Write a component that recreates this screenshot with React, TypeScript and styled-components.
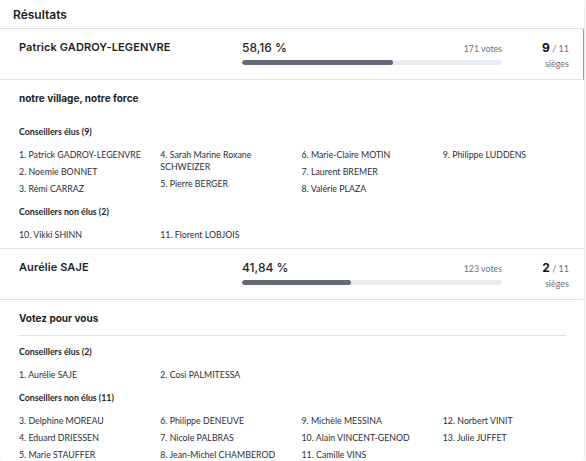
import { Fragment } from 'react';
import styled, { createGlobalStyle } from 'styled-components';

type Candidate = {
  name: string;
  percent: string;
  ratio: number;
  votes: number;
  seats: number;
  list: string;
  elected: string[][];
  notElected: string[][];
  titleRule?: boolean;
  active?: boolean;
};

const TOTAL_SEATS = 11;

const CANDIDATES: Candidate[] = [
  {
    name: 'Patrick GADROY-LEGENVRE',
    percent: '58,16 %',
    ratio: 0.5816,
    votes: 171,
    seats: 9,
    list: 'notre village, notre force',
    active: true,
    elected: [
      ['1. Patrick GADROY-LEGENVRE', '2. Noemie BONNET', '3. Rémi CARRAZ'],
      ['4. Sarah Marine Roxane SCHWEIZER', '5. Pierre BERGER'],
      ['6. Marie-Claire MOTIN', '7. Laurent BREMER', '8. Valérie PLAZA'],
      ['9. Philippe LUDDENS'],
    ],
    notElected: [['10. Vikki SHINN'], ['11. Florent LOBJOIS'], [], []],
  },
  {
    name: 'Aurélie SAJE',
    percent: '41,84 %',
    ratio: 0.4184,
    votes: 123,
    seats: 2,
    list: 'Votez pour vous',
    titleRule: true,
    elected: [['1. Aurélie SAJE'], ['2. Cosi PALMITESSA'], [], []],
    notElected: [
      ['3. Delphine MOREAU', '4. Eduard DRIESSEN', '5. Marie STAUFFER'],
      ['6. Philippe DENEUVE', '7. Nicole PALBRAS', '8. Jean-Michel CHAMBEROD'],
      ['9. Michèle MESSINA', '10. Alain VINCENT-GENOD', '11. Camille VINS'],
      ['12. Norbert VINIT', '13. Julie JUFFET'],
    ],
  },
];

// names only wrap between words, never at a hyphen
function MemberName({ name }: { name: string }) {
  return (
    <Member>
      {name.split(' ').map((w, i) => (
        <Fragment key={i}>
          {i > 0 && ' '}
          <Word>{w}</Word>
        </Fragment>
      ))}
    </Member>
  );
}

function MemberColumns({ columns }: { columns: string[][] }) {
  return (
    <Columns>
      {columns.map((col, i) => (
        <Column key={i}>
          {col.map(m => (
            <MemberName key={m} name={m} />
          ))}
        </Column>
      ))}
    </Columns>
  );
}

export default function App() {
  return (
    <>
      <GlobalStyle />
      <Card>
        <Header>Résultats</Header>
        {CANDIDATES.map(c => (
          <div key={c.name}>
            <CandidateRow $active={c.active}>
              <CandidateName>{c.name}</CandidateName>
              <Score>
                <ScoreTop>
                  <Percent>{c.percent}</Percent>
                  <Votes>{c.votes} votes</Votes>
                </ScoreTop>
                <Track>
                  <Fill style={{ width: `${c.ratio * 100}%` }} />
                </Track>
              </Score>
              <Seats>
                <SeatCount>
                  <b>{c.seats}</b> / {TOTAL_SEATS}
                </SeatCount>
                <SeatLabel>sièges</SeatLabel>
              </Seats>
            </CandidateRow>
            <ListSection>
              <ListTitle $rule={c.titleRule}>{c.list}</ListTitle>
              <GroupTitle>Conseillers élus ({c.seats})</GroupTitle>
              <MemberColumns columns={c.elected} />
              <GroupTitle>Conseillers non élus ({c.notElected.flat().length})</GroupTitle>
              <MemberColumns columns={c.notElected} />
            </ListSection>
          </div>
        ))}
      </Card>
    </>
  );
}

// ─── Styles ──────────────────────────────────────────────────────────────

const GlobalStyle = createGlobalStyle`
  body {
    margin: 0;
    background: #fff;
    font-family: Inter, "Noto Sans", sans-serif;
    color: #1d1f24;
  }
`;

const Card = styled.div`
  width: 584px;
  background: #fff;
  border-radius: 0 0 10px 10px;
  box-shadow: 0 0 2px rgba(0, 0, 0, 0.25);
  overflow: hidden;
`;

const Header = styled.div`
  height: 28px;
  padding-left: 13px;
  display: flex;
  align-items: center;
  font-size: 12px;
  font-weight: 600;
  border-bottom: 1px solid #dfe1e6;
`;

const CandidateRow = styled.div<{ $active?: boolean }>`
  display: grid;
  grid-template-columns: 223px 260px 1fr;
  height: 50px;
  padding-left: 19px;
  border-bottom: 1px solid #dfe1e6;
  border-right: 1px solid ${p => (p.$active ? '#9a9ca4' : 'transparent')};
`;

const CandidateName = styled.div`
  padding-top: 11px;
  font-size: 11px;
  font-weight: 600;
  letter-spacing: 0.1px;
`;

const Score = styled.div`
  padding-top: 11px;
  display: flex;
  flex-direction: column;
  gap: 5px;
`;

const ScoreTop = styled.div`
  display: flex;
  justify-content: space-between;
  align-items: baseline;
`;

const Percent = styled.span`
  font-size: 12px;
  font-weight: 500;
`;

const Votes = styled.span`
  font-family: Lato, sans-serif;
  font-size: 8.8px;
  color: #6b6f7b;
`;

const Track = styled.div`
  height: 5px;
  border-radius: 3px;
  background: #e9ecf0;
  overflow: hidden;
`;

const Fill = styled.div`
  height: 100%;
  border-radius: 3px;
  background: #646a78;
`;

const Seats = styled.div`
  padding-top: 11px;
  padding-right: 14px;
  display: flex;
  flex-direction: column;
  align-items: flex-end;
  gap: 3px;
  font-family: Lato, sans-serif;
`;

const SeatCount = styled.span`
  font-size: 9px;
  color: #6f6c86;

  & b {
    font-family: Inter, sans-serif;
    font-size: 12px;
    font-weight: 700;
    color: #111;
  }
`;

const SeatLabel = styled.span`
  font-size: 9px;
  color: #6b6f7b;
`;

const ListSection = styled.div`
  padding: 11px 18px 0 19px;
  border-bottom: 1px solid #dfe1e6;
`;

const ListTitle = styled.div<{ $rule?: boolean }>`
  font-size: 10px;
  line-height: 14px;
  font-weight: 700;
  padding-bottom: 10px;
  margin-bottom: 10px;
  border-bottom: 1px solid ${p => (p.$rule ? '#dfe1e6' : 'transparent')};
`;

const GroupTitle = styled.div`
  font-family: Lato, sans-serif;
  font-size: 8.8px;
  line-height: 12px;
  font-weight: 700;
  margin-bottom: 11px;
`;

const Columns = styled.div`
  display: grid;
  grid-template-columns: repeat(4, minmax(0, 1fr));
  column-gap: 18px;
  margin-bottom: 11px;

  &:last-child {
    margin-bottom: 7px;
  }
`;

const Column = styled.div`
  display: flex;
  flex-direction: column;
  gap: 5px;
  min-width: 0;
`;

const Member = styled.div`
  font-family: Lato, sans-serif;
  font-size: 8.8px;
  line-height: 12px;
  color: #2a2e38;
`;

const Word = styled.span`
  white-space: nowrap;
`;
